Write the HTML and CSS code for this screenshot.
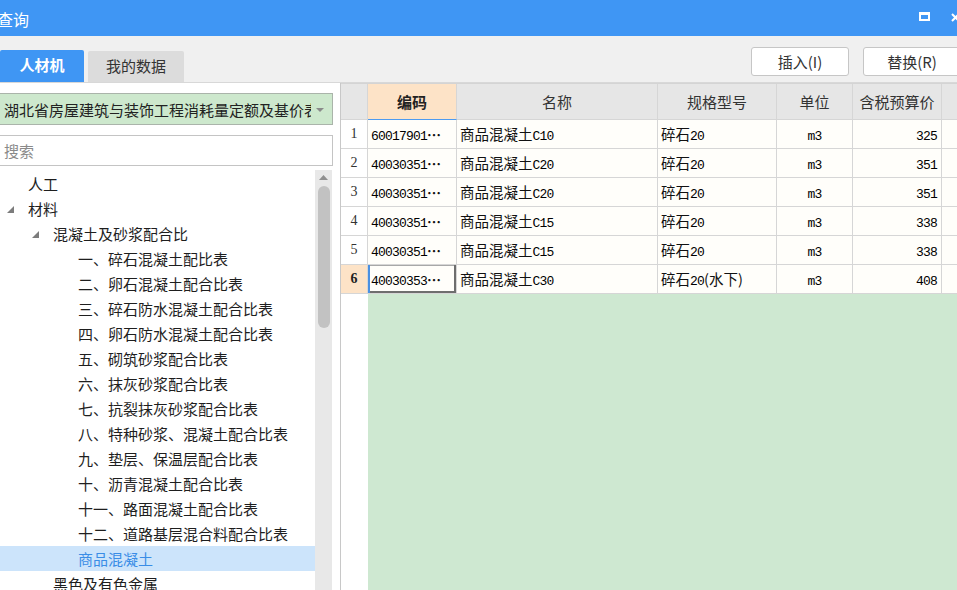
FILE: index.html
```html
<!DOCTYPE html>
<html lang="zh-CN">
<head>
<meta charset="utf-8">
<title>查询</title>
<link rel="stylesheet" href="styles.css">
</head>
<body>
<div class="window">
  <div class="titlebar">
    <span class="title">查询</span>
    <div class="winbtns">
      <span class="restore"></span>
      <svg class="close" width="9" height="9" viewBox="0 0 9 9"><path d="M1 1L8 8M8 1L1 8" stroke="#fff" stroke-width="2"/></svg>
    </div>
  </div>
  <div class="toolbar">
    <div class="tabs">
      <div class="tab active">人材机</div>
      <div class="tab">我的数据</div>
    </div>
    <div class="actions">
      <button class="btn">插入(I)</button>
      <button class="btn">替换(R)</button>
    </div>
  </div>
  <div class="body">
    <div class="left">
      <div class="select">
        <span class="select-text">湖北省房屋建筑与装饰工程消耗量定额及基价表</span>
        <svg class="select-arrow" width="8" height="4" viewBox="0 0 8 4"><path d="M0 0H8L4 4Z" fill="#8a8a8a"/></svg>
      </div>
      <div class="search">搜索</div>
      <div class="treewrap">
        <div class="tree">
          <div class="node l0"><span class="tg"></span>人工</div>
          <div class="node l0"><span class="tg"><svg width="7" height="7" viewBox="0 0 7 7"><path d="M7 0V7H0Z" fill="#7c7c7c"/></svg></span>材料</div>
          <div class="node l1"><span class="tg"><svg width="7" height="7" viewBox="0 0 7 7"><path d="M7 0V7H0Z" fill="#7c7c7c"/></svg></span>混凝土及砂浆配合比</div>
          <div class="node l2"><span class="tg"></span>一、碎石混凝土配比表</div>
          <div class="node l2"><span class="tg"></span>二、卵石混凝土配合比表</div>
          <div class="node l2"><span class="tg"></span>三、碎石防水混凝土配合比表</div>
          <div class="node l2"><span class="tg"></span>四、卵石防水混凝土配合比表</div>
          <div class="node l2"><span class="tg"></span>五、砌筑砂浆配合比表</div>
          <div class="node l2"><span class="tg"></span>六、抹灰砂浆配合比表</div>
          <div class="node l2"><span class="tg"></span>七、抗裂抹灰砂浆配合比表</div>
          <div class="node l2"><span class="tg"></span>八、特种砂浆、混凝土配合比表</div>
          <div class="node l2"><span class="tg"></span>九、垫层、保温层配合比表</div>
          <div class="node l2"><span class="tg"></span>十、沥青混凝土配合比表</div>
          <div class="node l2"><span class="tg"></span>十一、路面混凝土配合比表</div>
          <div class="node l2"><span class="tg"></span>十二、道路基层混合料配合比表</div>
          <div class="node l2 selected"><span class="tg"></span>商品混凝土</div>
          <div class="node l1"><span class="tg"></span>黑色及有色金属</div>
        </div>
        <div class="scrollbar">
          <svg class="sb-up" width="9" height="5" viewBox="0 0 9 5"><path d="M0 5H9L4.5 0Z" fill="#8f8f8f"/></svg>
          <div class="sb-thumb"></div>
        </div>
        <div class="gutter"></div>
      </div>
    </div>
    <div class="grid">
      <div class="row head">
        <div class="c rn"></div>
        <div class="c code-h">编码</div>
        <div class="c">名称</div>
        <div class="c">规格型号</div>
        <div class="c">单位</div>
        <div class="c">含税预算价</div>
        <div class="c"></div>
      </div>
      <div class="row">
        <div class="c rn">1</div>
        <div class="c l"><span class="n">60017901</span><span class="ell">⋯</span></div>
        <div class="c l">商品混凝土<span class="n">C10</span></div>
        <div class="c l">碎石<span class="n">20</span></div>
        <div class="c m"><span class="n">m3</span></div>
        <div class="c r"><span class="n">325</span></div>
        <div class="c"></div>
      </div>
      <div class="row">
        <div class="c rn">2</div>
        <div class="c l"><span class="n">40030351</span><span class="ell">⋯</span></div>
        <div class="c l">商品混凝土<span class="n">C20</span></div>
        <div class="c l">碎石<span class="n">20</span></div>
        <div class="c m"><span class="n">m3</span></div>
        <div class="c r"><span class="n">351</span></div>
        <div class="c"></div>
      </div>
      <div class="row">
        <div class="c rn">3</div>
        <div class="c l"><span class="n">40030351</span><span class="ell">⋯</span></div>
        <div class="c l">商品混凝土<span class="n">C20</span></div>
        <div class="c l">碎石<span class="n">20</span></div>
        <div class="c m"><span class="n">m3</span></div>
        <div class="c r"><span class="n">351</span></div>
        <div class="c"></div>
      </div>
      <div class="row">
        <div class="c rn">4</div>
        <div class="c l"><span class="n">40030351</span><span class="ell">⋯</span></div>
        <div class="c l">商品混凝土<span class="n">C15</span></div>
        <div class="c l">碎石<span class="n">20</span></div>
        <div class="c m"><span class="n">m3</span></div>
        <div class="c r"><span class="n">338</span></div>
        <div class="c"></div>
      </div>
      <div class="row">
        <div class="c rn">5</div>
        <div class="c l"><span class="n">40030351</span><span class="ell">⋯</span></div>
        <div class="c l">商品混凝土<span class="n">C15</span></div>
        <div class="c l">碎石<span class="n">20</span></div>
        <div class="c m"><span class="n">m3</span></div>
        <div class="c r"><span class="n">338</span></div>
        <div class="c"></div>
      </div>
      <div class="row current">
        <div class="c rn">6</div>
        <div class="c l focus"><span class="n">40030353</span><span class="ell">⋯</span></div>
        <div class="c l">商品混凝土<span class="n">C30</span></div>
        <div class="c l">碎石<span class="n">20</span>(水下)</div>
        <div class="c m"><span class="n">m3</span></div>
        <div class="c r"><span class="n">408</span></div>
        <div class="c"></div>
      </div>
      <div class="filler">
        <div class="filler-rn"></div>
        <div class="filler-area"></div>
      </div>
    </div>
  </div>
</div>
</body>
</html>
```

FILE: styles.css
```css
html, body {
  margin: 0;
  padding: 0;
  width: 957px;
  height: 590px;
  overflow: hidden;
  background: #fff;
  font-family: "Noto Sans CJK SC", "Microsoft YaHei", sans-serif;
}

.window {
  display: flex;
  flex-direction: column;
  height: 590px;
}

/* title bar */
.titlebar {
  flex: none;
  height: 36px;
  background: #3f96f4;
  color: #fff;
  display: flex;
  align-items: flex-start;
}
.title {
  font-size: 16px;
  line-height: 20px;
  margin-top: 9px;
  margin-left: -3px;
}
.winbtns {
  margin-left: auto;
  margin-right: -3px;
  display: flex;
  align-items: flex-start;
  gap: 21px;
}
.restore {
  display: block;
  margin-top: 12px;
  width: 11px;
  height: 9px;
  box-sizing: border-box;
  border: 2px solid #fff;
  border-top-width: 3px;
}
.close {
  display: block;
  margin-top: 13px;
}

/* toolbar */
.toolbar {
  flex: none;
  height: 47px;
  box-sizing: border-box;
  background: #f0f0f0;
  border-bottom: 1px solid #d8d8d8;
  display: flex;
  align-items: flex-start;
}
.tabs {
  display: flex;
  align-items: flex-end;
  align-self: flex-end;
}
.tab {
  width: 96px;
  height: 31px;
  margin-left: 4px;
  background: #dcdcdc;
  color: #333;
  font-size: 15px;
  line-height: 29px;
  text-align: center;
  border-radius: 2px 2px 0 0;
}
.tab.active {
  width: 84px;
  height: 32px;
  line-height: 30px;
  margin-left: 0;
  background: #3f96f4;
  color: #fff;
  font-weight: bold;
}
.actions {
  display: flex;
  gap: 14px;
  margin-left: 567px;
  margin-top: 11px;
}
.btn {
  width: 98px;
  height: 29px;
  flex: none;
  border: 1px solid #c6c6c6;
  border-radius: 3px;
  background: #fff;
  color: #333;
  font-family: "Noto Sans CJK SC", sans-serif;
  font-size: 15px;
  padding: 0;
}

/* body */
.body {
  flex: 1;
  min-height: 0;
  display: flex;
}
.left {
  flex: none;
  width: 340px;
  border-right: 1px solid #c8c8c8;
  display: flex;
  flex-direction: column;
  background: #fff;
}
.select {
  margin-top: 10px;
  margin-left: -1px;
  width: 334px;
  height: 32px;
  box-sizing: border-box;
  border: 1px solid #aab4aa;
  background: #cde8cd;
  display: flex;
  align-items: center;
  position: relative;
}
.select-text {
  display: block;
  width: 311px;
  box-sizing: border-box;
  padding-left: 4px;
  overflow: hidden;
  white-space: nowrap;
  font-size: 15px;
  color: #222;
}
.select-arrow {
  position: absolute;
  right: 8px;
  top: 14px;
}
.search {
  margin-top: 10px;
  margin-left: -1px;
  width: 334px;
  height: 31px;
  box-sizing: border-box;
  border: 1px solid #c4c4c4;
  padding-left: 4px;
  font-size: 15px;
  line-height: 29px;
  color: #8a8a8a;
}
.treewrap {
  flex: 1;
  min-height: 0;
  margin-top: 4px;
  display: flex;
  overflow: hidden;
}
.tree {
  width: 315px;
  flex: none;
  padding-top: 1px;
}
.node {
  height: 25px;
  display: flex;
  align-items: center;
  font-size: 15px;
  color: #1e1e1e;
  white-space: nowrap;
  padding-left: 3px;
}
.node.l1 { padding-left: 28px; }
.node.l2 { padding-left: 53px; }
.tg {
  flex: none;
  width: 25px;
  height: 25px;
  display: flex;
  align-items: center;
  padding-left: 4px;
  box-sizing: border-box;
}
.tg svg { display: block; margin-top: 1px; }
.node.selected {
  background: #cce4fb;
  color: #3a8de6;
}
.scrollbar {
  flex: none;
  width: 17px;
  background: #e8e8e8;
  display: flex;
  flex-direction: column;
  align-items: center;
}
.sb-up {
  display: block;
  margin-top: 5px;
}
.sb-thumb {
  margin-top: 6px;
  width: 12px;
  height: 142px;
  border-radius: 6px;
  background: #c2c2c2;
}
.gutter {
  flex: none;
  width: 8px;
}

/* grid */
.grid {
  flex: 1;
  min-width: 0;
  display: flex;
  flex-direction: column;
  border-top: 1px solid #d4d4d4;
  overflow: hidden;
}
.row {
  flex: none;
  display: grid;
  grid-template-columns: 27px 89px 201px 119px 76px 89px 40px;
  height: 29px;
}
.c {
  box-sizing: border-box;
  border-right: 1px solid #d6d6d6;
  border-bottom: 1px solid #d6d6d6;
  background: #fffefa;
  font-size: 14.5px;
  line-height: 28px;
  color: #111;
  white-space: nowrap;
  overflow: hidden;
}
.c.l { padding-left: 3px; }
.c.m { text-align: center; }
.c.r { text-align: right; padding-right: 4px; }
.c.rn {
  text-align: center;
  background: #fff;
  font-family: "Liberation Serif", serif;
  font-size: 14px;
  color: #333;
}
.n {
  font-family: "Liberation Mono", monospace;
  font-size: 13px;
  letter-spacing: -0.8px;
  color: #000;
}
.ell {
  font-family: "Noto Sans CJK SC", sans-serif;
  font-size: 14px;
  font-weight: bold;
}
.row.head {
  height: 36px;
}
.row.head .c {
  background: #e6e6e6;
  text-align: center;
  font-size: 15px;
  line-height: 35px;
  color: #333;
}
.row.head .c.code-h {
  background: #fde3c7;
  font-weight: bold;
  color: #222;
  border-bottom-color: #4d9bf0;
}
.row.current .c.rn {
  background: #fde3c7;
  font-weight: bold;
  color: #222;
}
.c.focus {
  box-shadow: inset 2px 0 0 #4a90e2, inset -2px -2px 0 #6e6e6e, inset 0 1px 0 #a8a8a8;
}
.filler {
  flex: 1;
  display: flex;
}
.filler-rn {
  width: 27px;
  flex: none;
  background: #fff;
}
.filler-area {
  flex: 1;
  background: #cee8d1;
}
```
